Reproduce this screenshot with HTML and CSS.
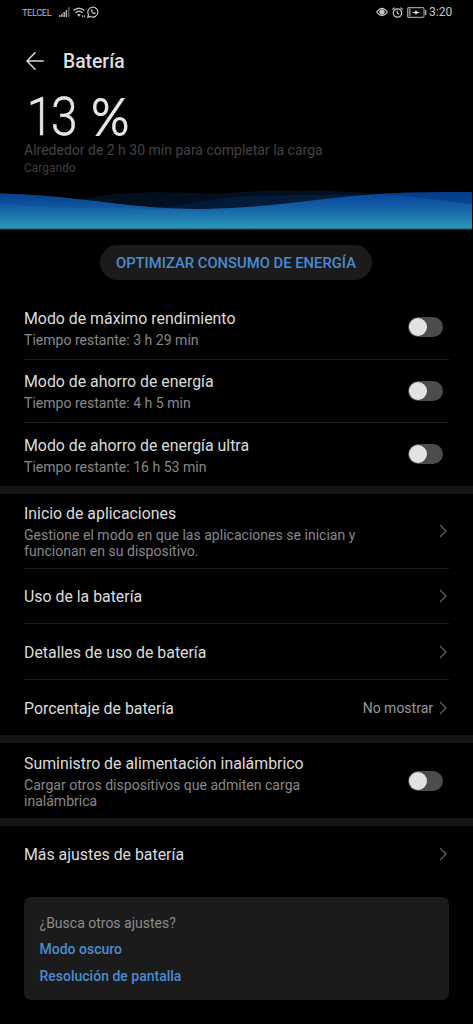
FILE: index.html
```html
<!DOCTYPE html>
<html lang="es">
<head>
<meta charset="utf-8">
<title>Batería</title>
<link rel="stylesheet" href="styles.css">
</head>
<body>
<div class="status">
  <div class="status-left">
    <span class="carrier">TELCEL</span>
    <svg class="signal" width="11" height="10" viewBox="0 0 11 10"><path d="M.8 10V8M3 10V6.8M5.2 10V5M7.4 10V3" stroke="#b5b5b5" stroke-width="1.5"/><path d="M9.8 10V0" stroke="#555" stroke-width="1.5"/></svg>
    <svg class="wifi" width="13" height="11" viewBox="0 0 13 11" fill="none" stroke="#bdbdbd" stroke-width="1.4"><path d="M.6 3.6Q6 -1.2 11.4 3.6M2.4 5.8Q6 2.6 9.6 5.8"/><path d="M4.2 7.8Q6 6.4 7.8 7.8L6 9.8z" fill="#bdbdbd" stroke="none"/><path d="M9.6 8.2v2.2M11.6 8.2v2.2" stroke-width="1"/></svg>
    <svg class="whatsapp" width="12" height="12" viewBox="0 0 12 12" fill="none" stroke="#c4c4c4"><path d="M.8 11.2 1.5 8.6A5 5 0 1 1 3.4 10.5z" stroke-width="1.2"/><path d="M4 3.4C3.4 5.8 6.2 8.6 8.4 8l.5-1.1-1.4-.7-.7.6C5.9 6.4 5.5 5.9 5.2 5.2l.6-.7-.6-1.3z" fill="#c4c4c4" stroke="none"/></svg>
  </div>
  <div class="status-right">
    <svg width="12" height="10" viewBox="0 0 12 10" fill="none" stroke="#c4c4c4"><path d="M.7 5Q6 -2.2 11.3 5 6 12.2.7 5z" stroke-width="1.2"/><circle cx="6" cy="5" r="2.3" fill="#c4c4c4"/></svg>
    <svg width="11" height="11" viewBox="0 0 11 11" fill="none" stroke="#c4c4c4" stroke-width="1.2"><circle cx="5.5" cy="6" r="4.2"/><path d="M5.3 3.5v2.7l1.7 1M.4 2.5 2.6.6M10.6 2.5 8.4.6"/></svg>
    <svg class="battery" width="20" height="11" viewBox="0 0 20 11"><rect x=".6" y=".6" width="16.4" height="9.8" rx="1.2" fill="none" stroke="#9a9a9a" stroke-width="1.1"/><rect x="1.5" y="1.5" width="2.2" height="8" fill="#777"/><path d="M4.5 5.5 8 4.8 9 3l1 1.8 3.5.7-3.5.7L9 8 8 6.2z" fill="#ddd"/><path d="M18.6 3v5" stroke="#aaa" stroke-width="1.4"/></svg>
    <span class="clock">3:20</span>
  </div>
</div>

<header class="header">
  <svg width="19" height="20" viewBox="0 0 19 20" fill="none" stroke="#dcdcdc" stroke-width="1.5" stroke-linecap="round" stroke-linejoin="round"><path d="M9 1.8 1 10l8 8.2M1 10H17.2"/></svg>
  <h1 class="title">Batería</h1>
</header>

<section class="charge">
  <div class="level"><span class="number">13</span><span class="percent">%</span></div>
  <p class="estimate">Alrededor de 2 h 30 min para completar la carga</p>
  <p class="state">Cargando</p>
</section>

<svg class="wave" width="472" height="42" viewBox="0 0 472 42">
  <defs>
    <linearGradient id="water" x1="0" y1="3" x2="0" y2="39" gradientUnits="userSpaceOnUse"><stop offset="0" stop-color="#06439a"/><stop offset=".45" stop-color="#1664a8"/><stop offset="1" stop-color="#2c98b8"/></linearGradient>
    <linearGradient id="deep" x1="0" y1="3" x2="0" y2="19" gradientUnits="userSpaceOnUse"><stop offset="0" stop-color="#053a84"/><stop offset="1" stop-color="#10569e"/></linearGradient>
  </defs>
  <path d="M80 10C115 1 165 1 215 4 265 -1 335 -1 400 6V20H80z" fill="#020f1e"/>
  <path d="M150 18C185 16 215 7 255 6 300 5 350 3 400 7V22H150z" fill="#031b38"/>
  <path d="M0 3.5C40 4 75 9 115 13.5 150 17.5 170 19 205 19 250 18 290 13 330 8.5 365 4 400 2 472 2V39H0z" fill="url(#water)"/>
  <path d="M0 3.5C40 4 75 9 115 13.5 150 17.5 165 18.5 190 19 120 19 50 18 0 14z" fill="url(#deep)" opacity=".6"/>
  <path d="M380 4C410 2 445 2 472 2V14C445 11 415 6 380 4z" fill="#053a84" opacity=".65"/>
  <rect y="38.5" width="472" height="1" fill="#1b5d6e"/>
</svg>

<div class="action"><button class="optimize">OPTIMIZAR CONSUMO DE ENERGÍA</button></div>

<section class="group modes">
  <div class="row"><div class="copy"><h2 class="name">Modo de máximo rendimiento</h2><p class="note">Tiempo restante: 3 h 29 min</p></div><span class="toggle"></span></div>
  <div class="row"><div class="copy"><h2 class="name">Modo de ahorro de energía</h2><p class="note">Tiempo restante: 4 h 5 min</p></div><span class="toggle"></span></div>
  <div class="row"><div class="copy"><h2 class="name">Modo de ahorro de energía ultra</h2><p class="note">Tiempo restante: 16 h 53 min</p></div><span class="toggle"></span></div>
</section>

<section class="group">
  <div class="row tall"><div class="copy"><h2 class="name">Inicio de aplicaciones</h2><p class="note">Gestione el modo en que las aplicaciones se inician y<br>funcionan en su dispositivo.</p></div><svg class="chevron" viewBox="0 0 8 14"><path d="m1 1 6 6-6 6"/></svg></div>
  <div class="row"><h2 class="name">Uso de la batería</h2><svg class="chevron" viewBox="0 0 8 14"><path d="m1 1 6 6-6 6"/></svg></div>
  <div class="row"><h2 class="name">Detalles de uso de batería</h2><svg class="chevron" viewBox="0 0 8 14"><path d="m1 1 6 6-6 6"/></svg></div>
  <div class="row"><h2 class="name">Porcentaje de batería</h2><span class="value">No mostrar</span><svg class="chevron" viewBox="0 0 8 14"><path d="m1 1 6 6-6 6"/></svg></div>
</section>

<section class="group">
  <div class="row tall"><div class="copy"><h2 class="name">Suministro de alimentación inalámbrico</h2><p class="note">Cargar otros dispositivos que admiten carga<br>inalámbrica</p></div><span class="toggle"></span></div>
</section>

<section class="group last">
  <div class="row"><h2 class="name">Más ajustes de batería</h2><svg class="chevron" viewBox="0 0 8 14"><path d="m1 1 6 6-6 6"/></svg></div>
</section>

<aside class="card">
  <p class="question">¿Busca otros ajustes?</p>
  <a class="link">Modo oscuro</a>
  <a class="link">Resolución de pantalla</a>
</aside>
</body>
</html>
```
FILE: styles.css
```css
* { box-sizing: border-box; margin: 0; padding: 0; }
body { width: 473px; height: 1024px; overflow: hidden; background: #000; color: #dcdcdc; font-family: Roboto, "Liberation Sans", sans-serif; }
svg { display: block; flex: none; }

.status { display: flex; justify-content: space-between; height: 24px; padding: 0 21px 0 22px; align-items: center; }
.status-left, .status-right { display: flex; align-items: center; }
.carrier { font-size: 9.5px; letter-spacing: -.55px; line-height: 12px; padding-top: 1px; color: #b0b0b0; width: 30px; white-space: nowrap; }
.signal { margin-left: 7px; }
.wifi { margin-left: 3px; }
.whatsapp { margin-left: 1px; }
.status-right { gap: 4px; }
.clock { font-size: 12px; line-height: 14px; color: #c4c4c4; width: 23px; white-space: nowrap; }
.battery { margin-right: -2px; }

.header { display: flex; align-items: center; gap: 18px; height: 73px; padding-left: 26px; }
.title { font-size: 19.3px; line-height: 24px; font-weight: 500; color: #dedede; padding-top: 3px; }

.charge { height: 93px; padding-left: 24px; }
.level { display: flex; height: 44px; line-height: 38px; color: #e6e6e6; white-space: nowrap; }
.number { width: 67px; padding: 1px 0 0 3px; font-size: 53px; font-weight: 300; letter-spacing: -2.5px; transform: scaleX(.9); transform-origin: 0 0; -webkit-text-stroke: .5px #e6e6e6; }
.percent { font-family: Lato, sans-serif; font-size: 48px; font-weight: 400; transform: scaleY(1.1); transform-origin: 50% 40%; }
.estimate { font-size: 14px; line-height: 18px; color: #434343; }
.state { font-size: 12px; line-height: 16px; padding-top: 1px; color: #3e3e3e; }

.wave { height: 42px; }
.action { display: flex; justify-content: center; height: 64px; padding: 13px 1px 0 0; }
.optimize { width: 272px; height: 35px; border: 0; border-radius: 18px; background: #1b1b1b; color: #4a8bd0; font: 500 14.8px Roboto, sans-serif; white-space: nowrap; }

.group { border-bottom: 8px solid #151515; }
.row { display: flex; align-items: center; justify-content: space-between; height: 55.5px; margin: 0 24px; border-bottom: 1px solid #1d1d1d; }
.row:last-child { border-bottom: 0; }
.modes .row { height: 63.2px; padding-right: 6px; }
.modes { height: 197.8px; padding-top: .4px; }
.row.tall { height: 75px; }
.name { font-size: 15.87px; line-height: 22px; font-weight: 400; color: #dcdcdc; white-space: nowrap; padding-top: 2px; }
.copy { padding-bottom: 1px; }
.note { font-size: 14.05px; line-height: 16.5px; color: #888; white-space: nowrap; margin-top: 2px; }
.toggle { display: flex; flex: none; width: 35px; height: 20px; border-radius: 10px; background: #4c4c4c; }
.toggle::before { content: ""; width: 18px; height: 18px; margin: 1px; border-radius: 9px; background: #e2e2e2; }
.tall .toggle { margin-right: 6px; }
.chevron { width: 8px; height: 14px; margin-right: 2px; fill: none; stroke: #5b5b5b; stroke-width: 1.4; }
.value { margin-left: auto; margin-right: 6px; font-size: 14px; color: #999; }
.last { border-bottom: 0; }

.card { display: flex; flex-direction: column; margin: 15.2px 24px 0; height: 103px; padding: 15px 15.5px; border-radius: 7px; background: #1b1b1b; }
.question { font-size: 14px; line-height: 22px; color: #8c8c8c; margin-bottom: 2px; }
.link { font-size: 14px; line-height: 26.8px; font-weight: 500; color: #4a8bd0; }
```
